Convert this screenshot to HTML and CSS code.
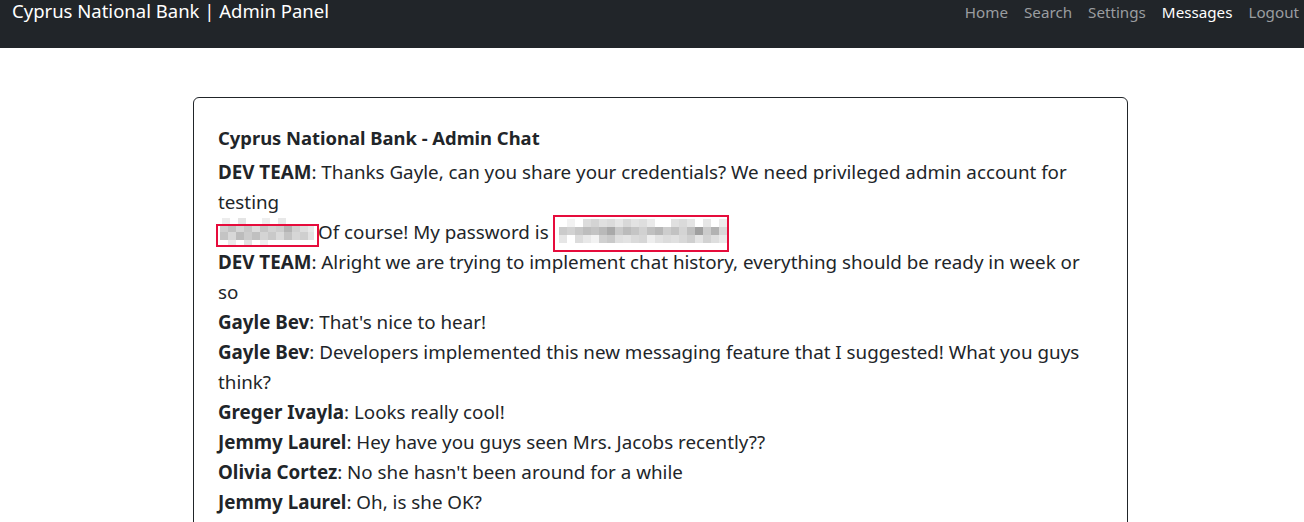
FILE: index.html
```html
<!DOCTYPE html>
<html lang="en">
<head>
<meta charset="utf-8">
<title>Cyprus National Bank | Admin Panel</title>
<link rel="stylesheet" href="styles.css">
</head>
<body>
<nav class="navbar">
  <a class="brand" href="#">Cyprus National Bank | Admin Panel</a>
  <ul class="nav">
    <li><a href="#">Home</a></li>
    <li><a href="#">Search</a></li>
    <li><a href="#">Settings</a></li>
    <li><a class="active" href="#">Messages</a></li>
    <li><a href="#">Logout</a></li>
  </ul>
</nav>
<main class="main">
  <section class="card">
    <h5 class="card-title">Cyprus National Bank - Admin Chat</h5>
    <div class="msg"><b>DEV TEAM</b>: Thanks Gayle, can you share your credentials? We need privileged admin account for testing</div>
    <div class="msg"><span class="redact redact-name"><svg width="100" height="30" viewBox="0 0 100 30">
      <rect x="0" y="0" width="100" height="30" fill="#fff"/>
      <rect x="4" y="1" width="8" height="6" fill="#ececec"/><rect x="20" y="1" width="8" height="6" fill="#e4e4e4"/><rect x="44" y="1" width="8" height="6" fill="#eeeeee"/><rect x="60" y="1" width="8" height="6" fill="#e8e8e8"/>
      <rect x="2" y="7" width="8" height="8" fill="#cfcfcf"/><rect x="10" y="7" width="8" height="8" fill="#c2c2c2"/><rect x="18" y="7" width="8" height="8" fill="#d6d6d6"/><rect x="26" y="7" width="8" height="8" fill="#c8c8c8"/><rect x="34" y="7" width="8" height="8" fill="#dcdcdc"/><rect x="42" y="7" width="8" height="8" fill="#c6c6c6"/><rect x="50" y="7" width="8" height="8" fill="#d3d3d3"/><rect x="58" y="7" width="8" height="8" fill="#cdcdcd"/><rect x="66" y="7" width="8" height="8" fill="#b4b4b4"/><rect x="74" y="7" width="8" height="8" fill="#d0d0d0"/><rect x="82" y="7" width="8" height="8" fill="#dedede"/><rect x="90" y="7" width="6" height="8" fill="#e8e8e8"/>
      <rect x="2" y="15" width="8" height="8" fill="#c4c4c4"/><rect x="10" y="15" width="8" height="8" fill="#d8d8d8"/><rect x="18" y="15" width="8" height="8" fill="#bcbcbc"/><rect x="26" y="15" width="8" height="8" fill="#cccccc"/><rect x="34" y="15" width="8" height="8" fill="#c0c0c0"/><rect x="42" y="15" width="8" height="8" fill="#d4d4d4"/><rect x="50" y="15" width="8" height="8" fill="#c9c9c9"/><rect x="58" y="15" width="8" height="8" fill="#dadada"/><rect x="66" y="15" width="8" height="8" fill="#c3c3c3"/><rect x="74" y="15" width="8" height="8" fill="#d6d6d6"/><rect x="82" y="15" width="8" height="8" fill="#cfcfcf"/><rect x="90" y="15" width="6" height="8" fill="#e2e2e2"/>
      <rect x="10" y="23" width="8" height="6" fill="#ebebeb"/><rect x="26" y="23" width="8" height="6" fill="#e2e2e2"/><rect x="42" y="23" width="8" height="6" fill="#efefef"/>
    </svg><span class="mark mark-name"></span></span>Of course! My password is <span class="redact redact-pass"><svg width="170" height="30" viewBox="0 0 170 30">
      <rect x="0" y="0" width="170" height="30" fill="#fff"/>
      <rect x="8" y="2" width="8" height="8" fill="#f2f2f2"/><rect x="24" y="2" width="8" height="8" fill="#dcdcdc"/><rect x="32" y="2" width="8" height="8" fill="#d4d4d4"/><rect x="40" y="2" width="8" height="8" fill="#e0e0e0"/><rect x="48" y="2" width="8" height="8" fill="#dbdbdb"/><rect x="56" y="2" width="8" height="8" fill="#e6e6e6"/><rect x="64" y="2" width="8" height="8" fill="#d8d8d8"/><rect x="72" y="2" width="8" height="8" fill="#e3e3e3"/><rect x="80" y="2" width="8" height="8" fill="#dedede"/><rect x="88" y="2" width="8" height="8" fill="#eaeaea"/><rect x="112" y="2" width="8" height="8" fill="#e0e0e0"/><rect x="120" y="2" width="8" height="8" fill="#dadada"/><rect x="128" y="2" width="8" height="8" fill="#e4e4e4"/><rect x="144" y="2" width="8" height="8" fill="#e6e6e6"/><rect x="160" y="2" width="8" height="8" fill="#ececec"/>
      <rect x="0" y="10" width="8" height="8" fill="#cbcbcb"/><rect x="8" y="10" width="8" height="8" fill="#d2d2d2"/><rect x="16" y="10" width="8" height="8" fill="#c7c7c7"/><rect x="24" y="10" width="8" height="8" fill="#bdbdbd"/><rect x="32" y="10" width="8" height="8" fill="#c3c3c3"/><rect x="40" y="10" width="8" height="8" fill="#b9b9b9"/><rect x="48" y="10" width="8" height="8" fill="#a9a9a9"/><rect x="56" y="10" width="8" height="8" fill="#c9c9c9"/><rect x="64" y="10" width="8" height="8" fill="#bbbbbb"/><rect x="72" y="10" width="8" height="8" fill="#c5c5c5"/><rect x="80" y="10" width="8" height="8" fill="#d1d1d1"/><rect x="88" y="10" width="8" height="8" fill="#c0c0c0"/><rect x="96" y="10" width="8" height="8" fill="#b7b7b7"/><rect x="104" y="10" width="8" height="8" fill="#cdcdcd"/><rect x="112" y="10" width="8" height="8" fill="#c2c2c2"/><rect x="120" y="10" width="8" height="8" fill="#d4d4d4"/><rect x="128" y="10" width="8" height="8" fill="#bfbfbf"/><rect x="136" y="10" width="8" height="8" fill="#a0a0a0"/><rect x="144" y="10" width="8" height="8" fill="#cbcbcb"/><rect x="152" y="10" width="8" height="8" fill="#b2b2b2"/><rect x="160" y="10" width="8" height="8" fill="#d8d8d8"/>
      <rect x="0" y="18" width="8" height="8" fill="#e6e6e6"/><rect x="16" y="18" width="8" height="8" fill="#dcdcdc"/><rect x="24" y="18" width="8" height="8" fill="#e8e8e8"/><rect x="32" y="18" width="8" height="8" fill="#f2f2f2"/><rect x="40" y="18" width="8" height="8" fill="#d0d0d0"/><rect x="48" y="18" width="8" height="8" fill="#c9c9c9"/><rect x="56" y="18" width="8" height="8" fill="#dfdfdf"/><rect x="64" y="18" width="8" height="8" fill="#e3e3e3"/><rect x="72" y="18" width="8" height="8" fill="#dadada"/><rect x="80" y="18" width="8" height="8" fill="#d6d6d6"/><rect x="88" y="18" width="8" height="8" fill="#eeeeee"/><rect x="96" y="18" width="8" height="8" fill="#e2e2e2"/><rect x="104" y="18" width="8" height="8" fill="#dcdcdc"/><rect x="112" y="18" width="8" height="8" fill="#e0e0e0"/><rect x="120" y="18" width="8" height="8" fill="#d8d8d8"/><rect x="128" y="18" width="8" height="8" fill="#cfcfcf"/><rect x="136" y="18" width="8" height="8" fill="#e4e4e4"/><rect x="144" y="18" width="8" height="8" fill="#d2d2d2"/><rect x="152" y="18" width="8" height="8" fill="#dedede"/><rect x="160" y="18" width="8" height="8" fill="#e9e9e9"/>
    </svg><span class="mark mark-pass"></span></span></div>
    <div class="msg"><b>DEV TEAM</b>: Alright we are trying to implement chat history, everything should be ready in week or so</div>
    <div class="msg"><b>Gayle Bev</b>: That's nice to hear!</div>
    <div class="msg"><b>Gayle Bev</b>: Developers implemented this new messaging feature that I suggested! What you guys think?</div>
    <div class="msg"><b>Greger Ivayla</b>: Looks really cool!</div>
    <div class="msg"><b>Jemmy Laurel</b>: Hey have you guys seen Mrs. Jacobs recently??</div>
    <div class="msg"><b>Olivia Cortez</b>: No she hasn't been around for a while</div>
    <div class="msg"><b>Jemmy Laurel</b>: Oh, is she OK?</div>
  </section>
</main>
</body>
</html>
```

FILE: styles.css
```css
* { box-sizing: border-box; }

html, body {
  margin: 0;
  padding: 0;
  background: #ffffff;
  color: #212529;
  font-family: "Noto Sans", "DejaVu Sans", sans-serif;
  overflow: hidden;
}

.navbar {
  display: flex;
  justify-content: space-between;
  align-items: flex-start;
  height: 48px;
  background: #212529;
  padding: 0 5px 0 12px;
}

.brand {
  color: #ffffff;
  font-size: 18.5px;
  line-height: 21px;
  text-decoration: none;
}

.nav {
  display: flex;
  gap: 16px;
  list-style: none;
  margin: 0;
  padding: 0;
}

.nav a {
  display: block;
  color: #9a9da0;
  font-size: 15.2px;
  line-height: 24px;
  text-decoration: none;
}

.nav a.active {
  color: #ffffff;
}

.main {
  padding: 49px 0 0 193px;
}

.card {
  width: 935px;
  border: 1px solid #212529;
  border-radius: 6px;
  padding: 28px 24px 24px 24px;
}

.card-title {
  margin: 0 0 7px 0;
  font-size: 18.4px;
  line-height: 24px;
  font-weight: 700;
}

.msg {
  font-size: 18.8px;
  line-height: 30px;
}

.msg b {
  font-weight: 700;
}

.redact {
  position: relative;
  display: inline-block;
  vertical-align: top;
  height: 30px;
}

.redact svg {
  display: block;
}

.redact-name {
  width: 100px;
}

.redact-pass {
  width: 170px;
  margin-left: 5px;
}

.mark {
  position: absolute;
  border: 2px solid #e60c3c;
}

.mark-name {
  left: -2px;
  top: 7px;
  width: 103px;
  height: 23px;
}

.mark-pass {
  left: -6px;
  top: -2px;
  width: 176px;
  height: 37px;
}
```
